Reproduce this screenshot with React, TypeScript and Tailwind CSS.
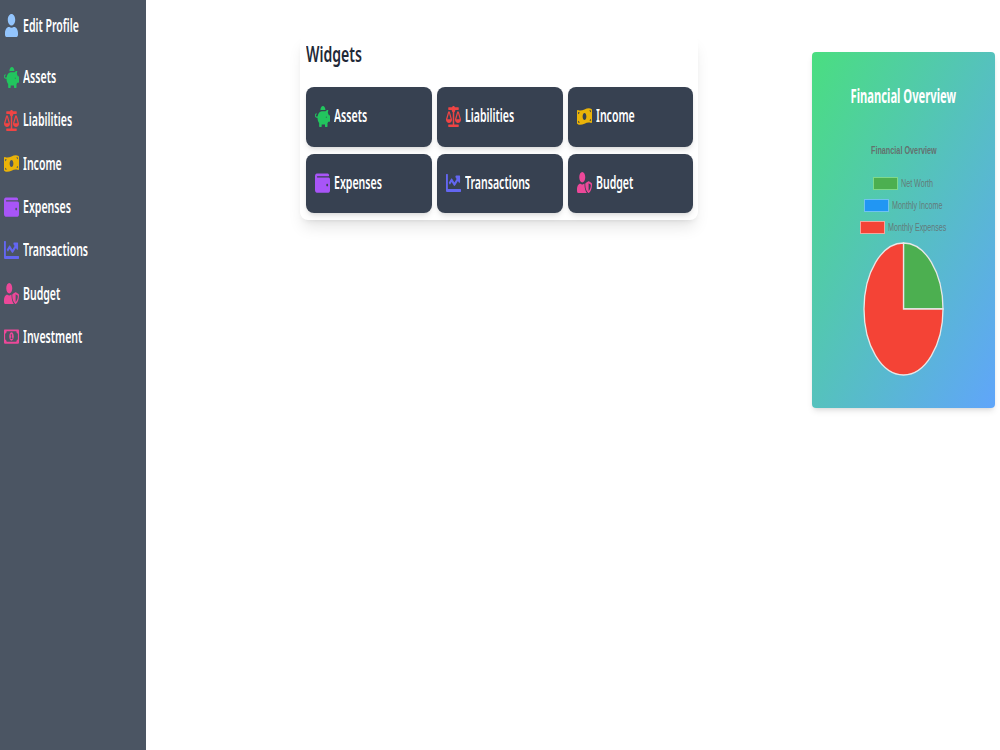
import React from 'react';
import { FaUser, FaPiggyBank, FaBalanceScale, FaMoneyBillWave, FaWallet, FaChartLine, FaUserShield, FaRegMoneyBillAlt } from 'react-icons/fa';
import type { IconType } from 'react-icons';

interface Item {
  label: string;
  Icon: IconType;
  color: string;
}

const items: Item[] = [
  { label: 'Assets', Icon: FaPiggyBank, color: 'h-[21px] text-[#22c55e]' },
  { label: 'Liabilities', Icon: FaBalanceScale, color: 'h-[21px] text-[#ef4444]' },
  { label: 'Income', Icon: FaMoneyBillWave, color: 'h-[19px] text-[#eab308]' },
  { label: 'Expenses', Icon: FaWallet, color: 'h-[22px] text-[#a855f7]' },
  { label: 'Transactions', Icon: FaChartLine, color: 'h-[24px] text-[#6366f1]' },
  { label: 'Budget', Icon: FaUserShield, color: 'h-[21px] text-[#ec4899]' },
];

const Label = ({ children }: { children: string }) => (
  <span className="ml-[4px] inline-block origin-left scale-x-[0.62] whitespace-nowrap text-[17px] font-semibold leading-[24px] text-white">{children}</span>
);

const SideLink = ({ label, Icon, color }: Item) => (
  <div className="flex h-[43.3px] items-center pl-[4px]">
    <Icon preserveAspectRatio="none" className={`w-[15px] shrink-0 ${color}`} />
    <Label>{label}</Label>
  </div>
);

const Widget = ({ label, Icon, color }: Item) => (
  <div className="flex items-center rounded-lg bg-[#374151] pb-[1px] pl-[9px] shadow-md">
    <Icon preserveAspectRatio="none" className={`w-[15px] shrink-0 ${color}`} />
    <Label>{label}</Label>
  </div>
);

const legend = [
  { label: 'Net Worth', box: 'bg-[#4caf50] border-[#7fd98a]', w: 'w-[33px]' },
  { label: 'Monthly Income', box: 'bg-[#2196f3] border-[#6fc3f0]', w: 'w-[51px]' },
  { label: 'Monthly Expenses', box: 'bg-[#f44336] border-[#f0a8a0]', w: 'w-[59px]' },
];

export default function App() {
  return (
    <div className="flex h-[750px] w-[1000px] overflow-hidden bg-white font-['Noto_Sans',sans-serif]">
      <aside className="w-[146px] shrink-0 bg-[#4b5563] pt-[4px]">
        <div className="mb-[7px] flex h-[43px] items-center pl-[5px]">
          <FaUser preserveAspectRatio="none" className="mr-[1px] h-[23px] w-[13px] shrink-0 text-[#93c5fd]" />
          <Label>Edit Profile</Label>
        </div>
        <div className="mt-[8.5px]">
          {items.map((item) => (
            <SideLink key={item.label} {...item} />
          ))}
          <SideLink label="Investment" Icon={FaRegMoneyBillAlt} color="h-[19px] text-[#ec4899]" />
        </div>
      </aside>

      <main className="ml-[154px] pt-[35px]">
        <section className="w-[398px] rounded-lg bg-white px-[6px] pb-[7px] shadow-lg">
          <h2 className="mb-[16px] flex h-[36px] items-center">
            <span className="inline-block origin-left scale-x-[0.64] whitespace-nowrap text-[22px] font-semibold leading-[30px] text-[#1f2937]">Widgets</span>
          </h2>
          <div className="grid h-[126px] w-[387px] grid-cols-[126px_126px_125px] gap-x-[5px] gap-y-[7px]">
            {items.map((item) => (
              <Widget key={item.label} {...item} />
            ))}
          </div>
        </section>
      </main>

      <section className="ml-[114px] mt-[52px] flex h-[356px] w-[183px] flex-col items-center rounded bg-[linear-gradient(to_bottom_right,#4ade80,#60a5fa)] shadow-md">
        <h3 className="mt-[31px] h-[26px] whitespace-nowrap">
          <span className="inline-block scale-x-[0.56] text-[20px] font-bold leading-[26px] text-white">Financial Overview</span>
        </h3>
        <p className="mt-[34px] scale-x-[0.66] whitespace-nowrap font-['Liberation_Sans',sans-serif] text-[11px] font-bold leading-[14px] text-[#666]/90">Financial Overview</p>
        <div className="mt-[20px] flex flex-col items-center gap-[9px]">
          {legend.map((l) => (
            <div key={l.label} className="flex h-[13px] items-center">
              <span className={`h-[13px] w-[25px] border ${l.box}`} />
              <span className={`ml-[3px] flex h-[13px] items-center ${l.w}`}>
                <span className="origin-left scale-x-[0.65] whitespace-nowrap font-['Liberation_Sans',sans-serif] text-[11px] leading-[13px] text-[#666]/80">{l.label}</span>
              </span>
            </div>
          ))}
        </div>
        <svg className="mt-[7px]" width="82" height="136" viewBox="0 0 82 136">
          <path d="M40.5 68 L40.5 2 A39.5 66 0 0 1 80 68 Z" fill="#4caf50" stroke="#e8e8e8" strokeWidth="1.3" />
          <path d="M40.5 68 L80 68 A39.5 66 0 1 1 40.5 2 Z" fill="#f44336" stroke="#e8e8e8" strokeWidth="1.3" />
        </svg>
      </section>
    </div>
  );
}
